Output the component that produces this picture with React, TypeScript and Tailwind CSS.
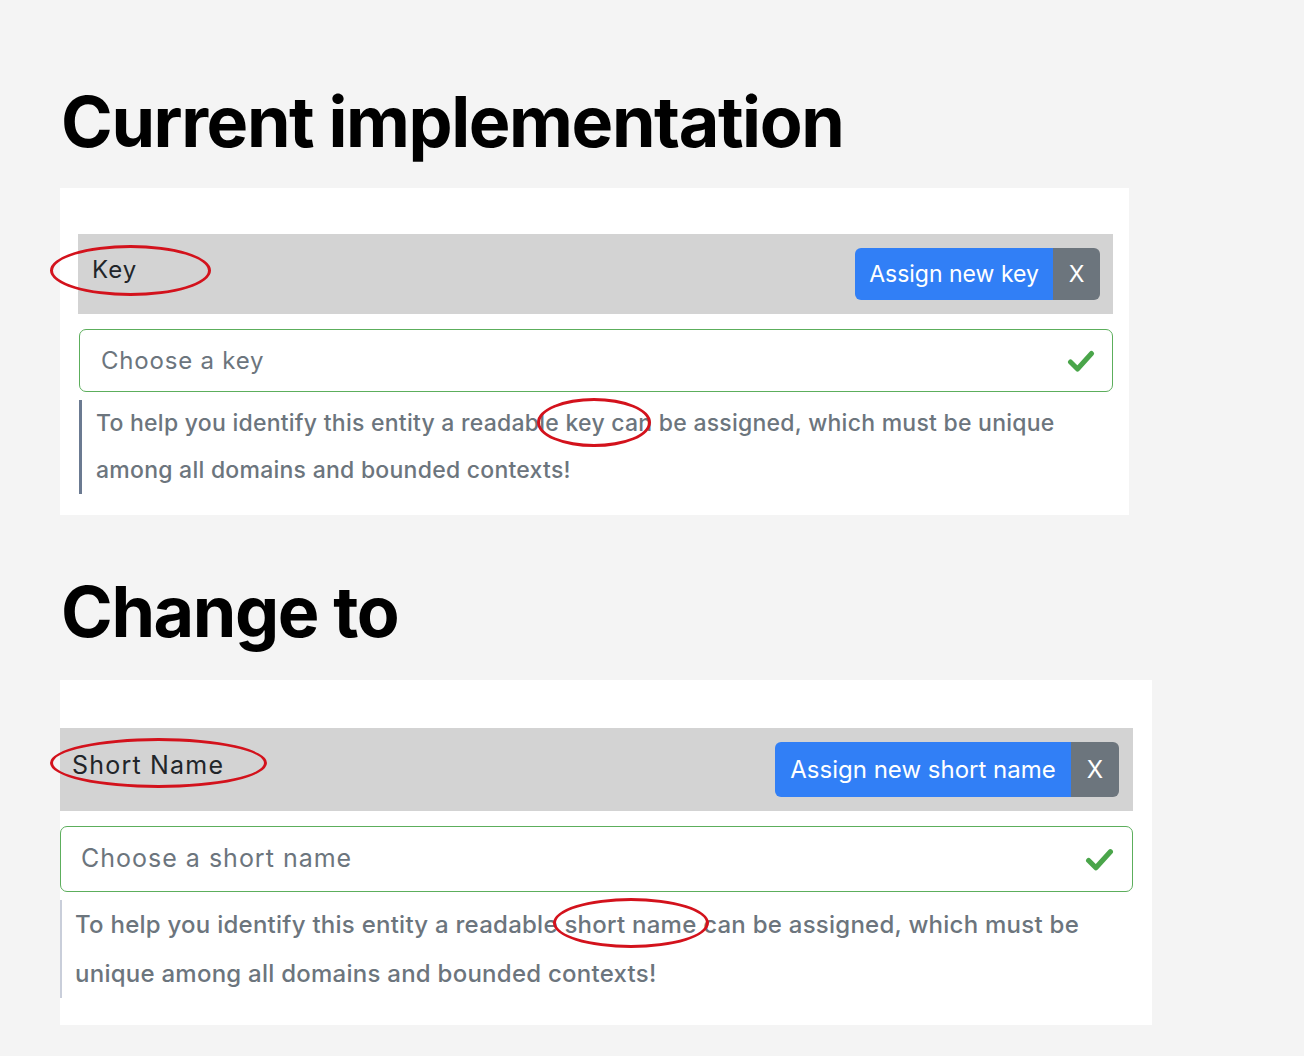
import React from "react";

const font = { fontFamily: "Inter, 'Noto Sans', Arial, sans-serif" };

function Check({ className }: { className?: string }) {
  return (
    <svg viewBox="0 0 28 24" className={className} fill="none">
      <polyline
        points="3.5,13 10.5,20 24.5,4.5"
        stroke="#4aa54a"
        strokeWidth="5"
        strokeLinecap="round"
        strokeLinejoin="round"
      />
    </svg>
  );
}

function Ellipse({ className }: { className: string }) {
  return <div className={`pointer-events-none absolute rounded-[50%] border-[3px] border-[#d3121c] ${className}`} />;
}

export default function App() {
  return (
    <div className="relative min-h-screen bg-[#f4f4f4] pl-[60px] pt-[87px] pb-[31px]" style={font}>
      <h1 className="ml-[1px] text-[70px] font-bold leading-[70px] tracking-[-0.02em] text-black">
        Current implementation
      </h1>

      {/* current */}
      <div className="mt-[31px] w-[1069px] bg-white pt-[46px] pl-[18px] pr-[16px] pb-[21px]">
        <div className="flex h-[80px] items-center justify-between bg-[#d3d3d3] pl-[14px] pr-[13px]">
          <span className="mb-[8px] text-[24px] tracking-[1px] text-[#212529]">Key</span>
          <div className="flex h-[52px] overflow-hidden rounded-[6px] text-[23px] text-white">
            <span className="flex w-[198px] items-center justify-center bg-[#317ff6]">Assign new key</span>
            <span className="flex w-[47px] items-center justify-center bg-[#6c757d]">X</span>
          </div>
        </div>
        <div className="mt-[15px] ml-[1px] flex h-[63px] items-center justify-between rounded-[7px] border-[1.5px] border-[#5cae5c] pl-[21px] pr-[17px]">
          <span className="text-[24px] tracking-[0.8px] text-[#6c757d]">Choose a key</span>
          <Check className="h-[24px] w-[28px]" />
        </div>
        <div className="mt-[8px] ml-[1px] border-l-[3px] border-[#6b7a91] pl-[14px] text-[23px] font-medium leading-[47px] tracking-[0.25px] text-[#6c757d]">
          To help you identify this entity a readable key can be assigned, which must be unique
          <br />
          among all domains and bounded contexts!
        </div>
      </div>

      <h1 className="mt-[62px] ml-[1px] text-[70px] font-bold leading-[70px] tracking-[-0.02em] text-black">
        Change to
      </h1>

      {/* change to */}
      <div className="mt-[33px] w-[1092px] bg-white pt-[48px] pr-[19px] pb-[27px]">
        <div className="flex h-[83px] items-center justify-between bg-[#d3d3d3] pl-[12px] pr-[14px]">
          <span className="mb-[8px] text-[25px] tracking-[1.2px] text-[#212529]">Short Name</span>
          <div className="flex h-[55px] overflow-hidden rounded-[6px] text-[24px] text-white">
            <span className="flex w-[296px] items-center justify-center bg-[#317ff6]">Assign new short name</span>
            <span className="flex w-[48px] items-center justify-center bg-[#6c757d]">X</span>
          </div>
        </div>
        <div className="mt-[15px] flex h-[66px] items-center justify-between rounded-[7px] border-[1.5px] border-[#5cae5c] pl-[20px] pr-[18px]">
          <span className="text-[25px] tracking-[1px] text-[#6c757d]">Choose a short name</span>
          <Check className="h-[25px] w-[29px]" />
        </div>
        <div className="mt-[8px] border-l-[2px] border-[#c9ceda] pl-[13px] text-[24px] font-medium leading-[49px] tracking-[0.25px] text-[#6c757d]">
          To help you identify this entity a readable short name can be assigned, which must be
          <br />
          unique among all domains and bounded contexts!
        </div>
      </div>

      <Ellipse className="left-[50px] top-[245px] h-[51px] w-[161px]" />
      <Ellipse className="left-[537px] top-[398px] h-[49px] w-[114px]" />
      <Ellipse className="left-[50px] top-[738px] h-[50px] w-[217px]" />
      <Ellipse className="left-[553px] top-[898px] h-[50px] w-[156px]" />
    </div>
  );
}
